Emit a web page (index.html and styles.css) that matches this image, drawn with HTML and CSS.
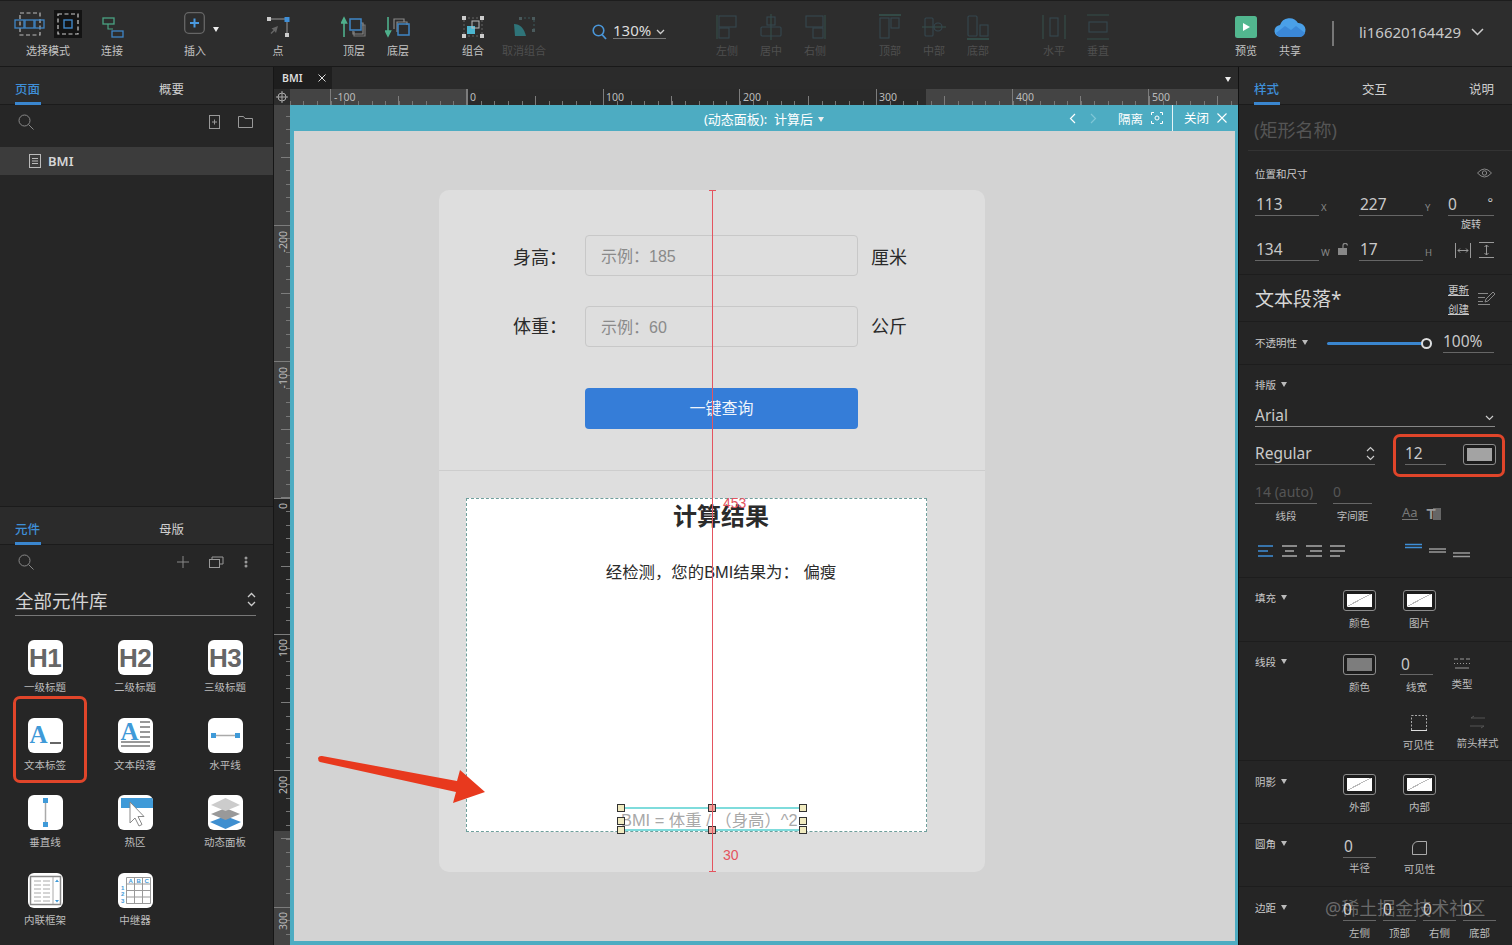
FILE: index.html
```html
<!DOCTYPE html>
<html lang="zh-CN">
<head>
    <meta charset="UTF-8">
    <title>BMI - Axure</title>
    <link rel="stylesheet" href="styles.css">
</head>
<body>
    <header class="toolbar">
        <div class="tool tool-mode">
            <div class="mode-icons">
                <svg width="32" height="24" viewBox="0 0 32 24" fill="none"><rect x="6" y="1" width="20" height="22" stroke="#bbb" stroke-width="1.2" stroke-dasharray="4 2.5"/><g stroke="#3f86c6" stroke-width="1.3"><rect x="1" y="8" width="9" height="8"/><rect x="11" y="8" width="9" height="8"/><rect x="21" y="8" width="9" height="8"/></g></svg>
                <span class="mode-active"><svg width="22" height="22" viewBox="0 0 22 22" fill="none"><rect x="1" y="1" width="20" height="20" stroke="#ccc" stroke-width="1.2" stroke-dasharray="4 2.5"/><rect x="7" y="7" width="8" height="8" stroke="#3f86c6" stroke-width="1.4"/></svg></span>
            </div>
            <span>选择模式</span>
        </div>
        <div class="tool">
            <svg width="24" height="24" viewBox="0 0 24 24" fill="none"><rect x="3" y="3" width="11" height="6" stroke="#4aa383" stroke-width="1.3"/><path d="M8 9v5h5" stroke="#4aa383" stroke-width="1.2"/><rect x="12" y="16" width="11" height="6" stroke="#3f86c6" stroke-width="1.3"/></svg>
            <span>连接</span>
        </div>
        <div class="tool g-insert">
            <div class="insert-icon">
                <svg width="21" height="22" viewBox="0 0 21 22" fill="none"><rect x=".7" y=".7" width="19.6" height="20.6" rx="4" stroke="#666" stroke-width="1.3"/><path d="M10.5 6.5v9M6 11h9" stroke="#4a9ae0" stroke-width="2"/></svg>
                <i class="tri tri-white"></i>
            </div>
            <span>插入</span>
        </div>
        <div class="tool g-point">
            <svg width="24" height="22" viewBox="0 0 24 22"><path d="M3 3h18v16" fill="none" stroke="#999" stroke-width="1"/><rect x="1" y="1" width="4" height="4" fill="#ccc"/><rect x="18.5" y="1" width="5" height="5" fill="#3f8fd8"/><rect x="19" y="17" width="4" height="4" fill="#ccc"/><path d="M12 10l-2 7-1.5-2-3 3-1-1 3-3-2-1.5z" fill="#666"/></svg>
            <span>点</span>
        </div>
        <div class="tool g-order">
            <svg width="26" height="22" viewBox="0 0 26 22" fill="none"><path d="M3 21V3M.5 7L3 2l2.5 5z" stroke="#4fb08c" stroke-width="1.6" fill="#4fb08c"/><path d="M14 16h-1v4h11V9h-3" stroke="#777" stroke-width="1.2"/><path d="M12 15v3h10V7h-2" stroke="#888" stroke-width="1.2"/><rect x="9" y="3" width="11" height="11" stroke="#3f86c6" stroke-width="1.5"/></svg>
            <span>顶层</span>
        </div>
        <div class="tool">
            <svg width="26" height="22" viewBox="0 0 26 22" fill="none"><path d="M3 1v17M.5 15L3 20l2.5-5z" stroke="#4fb08c" stroke-width="1.6" fill="#4fb08c"/><path d="M9 13V3h10v3M12 16V6h10v3" stroke="#888" stroke-width="1.2"/><rect x="13" y="8" width="11" height="11" stroke="#3f86c6" stroke-width="1.5"/></svg>
            <span>底层</span>
        </div>
        <div class="tool g-group">
            <svg width="22" height="22" viewBox="0 0 22 22" fill="none"><rect x="2" y="2" width="18" height="18" stroke="#666" stroke-dasharray="2 2"/><g fill="#ccc"><rect x="0" y="0" width="4" height="4"/><rect x="18" y="0" width="4" height="4"/><rect x="0" y="18" width="4" height="4"/><rect x="18" y="18" width="4" height="4"/></g><rect x="5" y="10" width="8" height="8" fill="#4cb6d0"/><rect x="10" y="5" width="7" height="7" stroke="#bbb"/></svg>
            <span>组合</span>
        </div>
        <div class="tool g-ungroup dim">
            <svg width="24" height="22" viewBox="0 0 24 22" fill="none"><path d="M8 2h14v14" stroke="#3c5a5c" stroke-dasharray="2 2"/><path d="M2 8c6 0 10 4 12 12H3z" fill="#2f7479"/><rect x="7" y="1" width="3" height="3" fill="#4a5a5c"/><rect x="20" y="1" width="3" height="3" fill="#4a5a5c"/><rect x="20" y="13" width="3" height="3" fill="#4a5a5c"/></svg>
            <span>取消组合</span>
        </div>
        <div class="zoom-box">
            <svg width="15" height="16" viewBox="0 0 15 16" fill="none"><circle cx="6.5" cy="6.5" r="5.3" stroke="#4a96d8" stroke-width="1.6"/><path d="M10 10.5l4 4.5" stroke="#4a96d8" stroke-width="1.8"/></svg>
            <div class="zoom-value">130%<svg width="9" height="6" viewBox="0 0 9 6" fill="none"><path d="M1 1l3.5 3.5L8 1" stroke="#ccc" stroke-width="1.3"/></svg></div>
        </div>
        <div class="tool g-align dim">
            <svg width="22" height="26" viewBox="0 0 22 26" fill="none" stroke="#35474f" stroke-width="1.1"><path d="M1 1v24" stroke="#354f4a"/><rect x="3" y="2" width="17" height="11"/><rect x="3" y="14" width="10" height="10"/></svg>
            <span>左侧</span>
        </div>
        <div class="tool dim">
            <svg width="22" height="26" viewBox="0 0 22 26" fill="none" stroke="#35474f" stroke-width="1.1"><path d="M11 0v26" stroke="#354f4a"/><rect x="7" y="3" width="8" height="8"/><rect x="1" y="13" width="20" height="9" rx="1"/></svg>
            <span>居中</span>
        </div>
        <div class="tool dim">
            <svg width="22" height="26" viewBox="0 0 22 26" fill="none" stroke="#35474f" stroke-width="1.1"><path d="M21 1v24" stroke="#354f4a"/><rect x="2" y="2" width="17" height="11"/><rect x="9" y="14" width="10" height="10"/></svg>
            <span>右侧</span>
        </div>
        <div class="tool g-valign dim">
            <svg width="22" height="26" viewBox="0 0 22 26" fill="none" stroke="#35474f" stroke-width="1.1"><path d="M0 1h22" stroke="#354f4a" stroke-width="1.8"/><rect x="1" y="4" width="9" height="20"/><rect x="12" y="4" width="8" height="10"/></svg>
            <span>顶部</span>
        </div>
        <div class="tool dim">
            <svg width="24" height="22" viewBox="0 0 24 22" fill="none" stroke="#35474f" stroke-width="1.1"><path d="M0 11h24" stroke="#354f4a"/><rect x="3" y="2" width="8" height="18" rx="1"/><circle cx="16" cy="11" r="4"/></svg>
            <span>中部</span>
        </div>
        <div class="tool dim">
            <svg width="22" height="26" viewBox="0 0 22 26" fill="none" stroke="#35474f" stroke-width="1.1"><path d="M0 25h22" stroke="#354f4a" stroke-width="1.8"/><rect x="1" y="2" width="9" height="20" rx="1"/><rect x="13" y="11" width="8" height="11"/></svg>
            <span>底部</span>
        </div>
        <div class="tool g-dist dim">
            <svg width="24" height="26" viewBox="0 0 24 26" fill="none" stroke="#35474f" stroke-width="1.1"><path d="M1 1v24M23 1v24" stroke="#354f4a"/><rect x="8" y="4" width="8" height="18"/></svg>
            <span>水平</span>
        </div>
        <div class="tool dim">
            <svg width="24" height="26" viewBox="0 0 24 26" fill="none" stroke="#35474f" stroke-width="1.1"><path d="M1 1h22M1 25h22" stroke="#354f4a"/><rect x="3" y="8" width="18" height="10"/></svg>
            <span>垂直</span>
        </div>
        <div class="tool g-share">
            <svg width="22" height="22" viewBox="0 0 22 22"><rect width="22" height="22" rx="2.5" fill="#52b78f"/><path d="M8 7l7 4-7 4z" fill="#fff"/></svg>
            <span>预览</span>
        </div>
        <div class="tool">
            <svg width="32" height="22" viewBox="0 0 32 22"><path d="M7 21a6 6 0 0 1-1-12 10 10 0 0 1 18-2 7 7 0 0 1 1 14z" fill="#4aa0e8"/><path d="M2 17l9-7 6 4 5-4 9 7a6 6 0 0 1-6 4H7a6 6 0 0 1-5-4z" fill="#3b88d8"/></svg>
            <span>共享</span>
        </div>
        <div class="tool-sep"></div>
        <div class="user">li16620164429<svg width="13" height="8" viewBox="0 0 13 8" fill="none"><path d="M1 1l5.5 5.5L12 1" stroke="#ccc" stroke-width="1.5"/></svg></div>
    </header>

    <div class="workspace">
        <aside class="left-panel">
            <section class="pages">
                <nav class="tabs">
                    <a class="tab active">页面</a>
                    <a class="tab tab-second">概要</a>
                </nav>
                <div class="search-row">
                    <svg width="16" height="16" viewBox="0 0 16 16" fill="none"><circle cx="6.5" cy="6.5" r="5.5" stroke="#888"/><path d="M10.5 10.5l5 5" stroke="#888"/></svg>
                    <div class="search-actions">
                        <svg width="11" height="14" viewBox="0 0 11 14" fill="none" stroke="#999"><rect x=".5" y=".5" width="10" height="13"/><path d="M3 7h5M5.5 4.5v5"/></svg>
                        <svg width="15" height="12" viewBox="0 0 15 12" fill="none" stroke="#999"><path d="M.5 11.5V.5h5l1.5 2h7.5v9z"/></svg>
                    </div>
                </div>
                <div class="page-row">
                    <svg width="12" height="14" viewBox="0 0 12 14" fill="none" stroke="#bbb"><rect x=".5" y=".5" width="11" height="13"/><path d="M3 4.5h6M3 7h6M3 9.5h6"/></svg>
                    BMI
                </div>
            </section>
            <section class="widgets">
                <nav class="tabs">
                    <a class="tab active">元件</a>
                    <a class="tab tab-second">母版</a>
                </nav>
                <div class="search-row">
                    <svg width="16" height="16" viewBox="0 0 16 16" fill="none"><circle cx="6.5" cy="6.5" r="5.5" stroke="#888"/><path d="M10.5 10.5l5 5" stroke="#888"/></svg>
                    <div class="search-actions widget-actions">
                        <svg width="12" height="12" viewBox="0 0 12 12" stroke="#888"><path d="M6 0v12M0 6h12"/></svg>
                        <svg width="15" height="12" viewBox="0 0 15 12" fill="none" stroke="#999"><rect x=".5" y="3.5" width="10" height="8"/><path d="M3 3V1h11v7h-3"/></svg>
                        <svg width="4" height="12" viewBox="0 0 4 12" fill="#999"><circle cx="2" cy="2" r="1.5"/><circle cx="2" cy="6" r="1.5"/><circle cx="2" cy="10" r="1.5"/></svg>
                    </div>
                </div>
                <div class="lib-select">全部元件库
                    <svg width="9" height="15" viewBox="0 0 9 15" fill="none" stroke="#ccc" stroke-width="1.3"><path d="M1 5l3.5-3.5L8 5M1 10l3.5 3.5L8 10"/></svg>
                </div>
                <div class="widget-grid">
                    <div class="widget"><div class="w-icon w-head">H1</div><span>一级标题</span></div>
                    <div class="widget"><div class="w-icon w-head">H2</div><span>二级标题</span></div>
                    <div class="widget"><div class="w-icon w-head">H3</div><span>三级标题</span></div>
                    <div class="widget">
                        <div class="w-icon w-label"><b>A</b><i></i></div><span>文本标签</span>
                    </div>
                    <div class="widget">
                        <div class="w-icon w-para"><b>A</b><svg width="35" height="35" viewBox="0 0 35 35" stroke="#777" stroke-width="1.4"><path d="M22 4h10M22 9h10M22 14h10M22 19h10M3 24h29M3 28h29"/></svg></div><span>文本段落</span>
                    </div>
                    <div class="widget">
                        <div class="w-icon"><svg width="35" height="35" viewBox="0 0 35 35"><path d="M5 17.5h25" stroke="#aaa" stroke-width="1.5"/><rect x="3" y="15" width="5" height="5" fill="#3f9ad8"/><rect x="27" y="15" width="5" height="5" fill="#3f9ad8"/></svg></div><span>水平线</span>
                    </div>
                    <div class="widget">
                        <div class="w-icon"><svg width="35" height="35" viewBox="0 0 35 35"><path d="M17.5 5v25" stroke="#aaa" stroke-width="1.5"/><rect x="15" y="3" width="5" height="5" fill="#3f9ad8"/><rect x="15" y="27" width="5" height="5" fill="#3f9ad8"/></svg></div><span>垂直线</span>
                    </div>
                    <div class="widget">
                        <div class="w-icon"><svg width="35" height="35" viewBox="0 0 35 35"><rect y="3" width="32" height="10" x="3" fill="#3f9ad8"/><path d="M12 7l0 21 5-5 4 8 3-1.5-4-8h6z" fill="#fff" stroke="#888"/></svg></div><span>热区</span>
                    </div>
                    <div class="widget">
                        <div class="w-icon"><svg width="35" height="35" viewBox="0 0 35 35"><path d="M17.5 21L33 27l-15.5 7L2 27z" fill="#3f8fd0"/><path d="M17.5 13L32 19l-14.5 6L3 19z" fill="#999"/><path d="M17.5 3L32 10l-14.5 6L3 10z" fill="#ccc"/></svg></div><span>动态面板</span>
                    </div>
                    <div class="widget">
                        <div class="w-icon"><svg width="35" height="35" viewBox="0 0 35 35" fill="none" stroke="#aaa"><rect x="2.5" y="3.5" width="30" height="28" stroke="#888" stroke-width="1.5"/><path d="M6 8h7M15 8h7M6 12h7M15 12h7M6 16h7M15 16h7M6 20h7M15 20h7M6 24h7M15 24h7M6 28h7M15 28h7"/><path d="M25 4v27"/><path d="M27 9l2-2.5L31 9zM27 27l2 2.5 2-2.5z" fill="#3f9ad8" stroke="none"/></svg></div><span>内联框架</span>
                    </div>
                    <div class="widget">
                        <div class="w-icon w-repeater">
                            <svg width="35" height="35" viewBox="0 0 35 35" fill="none" stroke="#999"><path d="M8.5 4.5h24v26h-24zM8.5 11h24M8.5 17.5h24M8.5 24h24M16.5 4.5v26M24.5 4.5v26"/><g fill="#3f9ad8" stroke="none" font-size="6" font-weight="700" font-family="Liberation Sans, sans-serif"><text x="10.5" y="10">A</text><text x="18.5" y="10">B</text><text x="26.5" y="10">C</text><text x="3" y="16.5">1</text><text x="3" y="23">2</text><text x="3" y="29.5">3</text></g></svg>
                        </div><span>中继器</span>
                    </div>
                </div>
                <div class="highlight highlight-label"></div>
            </section>
        </aside>

        <main class="center">
            <div class="doc-tabs">
                <div class="doc-tab">BMI<svg width="8" height="8" viewBox="0 0 8 8" stroke="#ddd"><path d="M.5.5l7 7M7.5.5l-7 7"/></svg></div>
                <i class="tri tri-white doc-caret"></i>
            </div>
            <div class="ruler-row">
                <div class="ruler-corner"><svg width="12" height="12" viewBox="0 0 12 12" fill="none" stroke="#aaa"><circle cx="6" cy="6" r="4"/><path d="M6 0v12M0 6h12"/></svg></div>
                <div class="h-ruler">
                    <span class="hr-label hr-m100">-100</span>
                    <span class="hr-label hr-0">0</span>
                    <span class="hr-label hr-100">100</span>
                    <span class="hr-label hr-200">200</span>
                    <span class="hr-label hr-300">300</span>
                    <span class="hr-label hr-400">400</span>
                    <span class="hr-label hr-500">500</span>
                </div>
            </div>
            <div class="stage-row">
                <div class="v-ruler">
                    <span class="vr-label vr-m300">-300</span>
                    <span class="vr-label vr-m200">-200</span>
                    <span class="vr-label vr-m100">-100</span>
                    <span class="vr-label vr-0">0</span>
                    <span class="vr-label vr-100">100</span>
                    <span class="vr-label vr-200">200</span>
                    <span class="vr-label vr-300">300</span>
                </div>
                <div class="stage">
                    <div class="state-bar">
                        <div class="state-name">(动态面板):&nbsp; 计算后<i class="tri tri-white"></i></div>
                        <div class="state-actions">
                            <svg width="7" height="11" viewBox="0 0 7 11" fill="none" stroke="#fff" stroke-width="1.2"><path d="M6 1L1.5 5.5 6 10"/></svg>
                            <svg class="state-next" width="7" height="11" viewBox="0 0 7 11" fill="none" stroke="#7fc6d6" stroke-width="1.2"><path d="M1 1l4.5 4.5L1 10"/></svg>
                            <span class="state-isolate">隔离</span>
                            <svg width="12" height="12" viewBox="0 0 12 12" fill="none" stroke="#fff"><path d="M.5 3V.5H3M9 .5h2.5V3M11.5 9v2.5H9M3 11.5H.5V9"/><circle cx="6" cy="6" r="2"/></svg>
                            <span class="state-close">关闭</span>
                            <svg width="10" height="10" viewBox="0 0 10 10" stroke="#fff" stroke-width="1.1"><path d="M.5.5l9 9M9.5.5l-9 9"/></svg>
                        </div>
                    </div>
                    <div class="canvas">
                        <div class="card">
                            <div class="card-form">
                                <div class="form-row form-row-first">
                                    <label>身高：</label>
                                    <div class="fake-input">示例：185</div>
                                    <span>厘米</span>
                                </div>
                                <div class="form-row">
                                    <label>体重：</label>
                                    <div class="fake-input">示例：60</div>
                                    <span>公斤</span>
                                </div>
                                <div class="query-btn">一键查询</div>
                            </div>
                            <div class="card-result">
                                <div class="result-panel">
                                    <h2>计算结果</h2>
                                    <p>经检测，您的BMI结果为： 偏瘦</p>
                                    <div class="selected-text">
                                        BMI = 体重 / （身高）^2
                                        <i class="handle h-tl"></i><i class="handle h-tc"></i><i class="handle h-tr"></i>
                                        <i class="handle h-ml"></i><i class="handle h-mr"></i>
                                        <i class="handle h-bl"></i><i class="handle h-bc"></i><i class="handle h-br"></i>
                                    </div>
                                </div>
                            </div>
                        </div>
                        <div class="guide"></div>
                        <span class="guide-num num-top">453</span>
                        <span class="guide-num num-bottom">30</span>
                        <svg class="big-arrow" width="170" height="52" viewBox="0 0 170 52"><path d="M1 3Q2 .5 5 1L140 26l3-11 25 22-32 11 3-11L3 7Q1 6 1 3z" fill="#e8391e"/></svg>
                    </div>
                </div>
            </div>
        </main>

        <aside class="right-panel">
            <nav class="tabs right-tabs">
                <a class="tab active">样式</a>
                <a class="tab">交互</a>
                <a class="tab">说明</a>
            </nav>
            <div class="name-row"><span>(矩形名称)</span></div>

            <section class="sec sec-pos">
                <div class="sec-head">位置和尺寸
                    <svg width="15" height="10" viewBox="0 0 15 10" fill="none" stroke="#888"><path d="M.5 5Q7.5-3 14.5 5 7.5 13 .5 5z"/><circle cx="7.5" cy="5" r="2.2"/></svg>
                </div>
                <div class="pos-row pos-first">
                    <div class="field f-pos">113</div><em class="axis">X</em>
                    <div class="field f-pos">227</div><em class="axis axis-y">Y</em>
                    <div class="rotate">
                        <div class="field f-rot">0<sup>°</sup></div>
                        <small>旋转</small>
                    </div>
                </div>
                <div class="pos-row pos-second">
                    <div class="field f-pos">134</div>
                    <em class="axis axis-w">W<svg width="11" height="12" viewBox="0 0 11 12"><rect x="0" y="5" width="9" height="7" fill="#888"/><path d="M5 5V2.5a2.2 2.2 0 0 1 4.4 0" fill="none" stroke="#888" stroke-width="1.2"/></svg></em>
                    <div class="field f-pos">17</div><em class="axis axis-y">H</em>
                    <div class="fit-icons">
                        <svg width="16" height="15" viewBox="0 0 16 15" fill="none" stroke="#999"><path d="M.5 0v15M15.5 0v15M3 7.5h10M3 7.5l2-2M3 7.5l2 2M13 7.5l-2-2M13 7.5l-2 2"/></svg>
                        <svg width="15" height="16" viewBox="0 0 15 16" fill="none" stroke="#999"><path d="M0 .5h15M0 15.5h15M7.5 3v10M7.5 3l-2 2M7.5 3l2 2M7.5 13l-2-2M7.5 13l2-2"/></svg>
                    </div>
                </div>
            </section>

            <section class="sec sec-style">
                <span class="style-name">文本段落*</span>
                <div class="style-links"><a>更新</a><a>创建</a></div>
                <svg width="17" height="14" viewBox="0 0 17 14" fill="none" stroke="#888"><path d="M0 2.5h10M0 6.5h7M0 10.5h5M0 13.5h12M7 11l1-3 7-7 2 2-7 7z"/></svg>
            </section>

            <section class="sec sec-opacity">
                <span class="sec-label op-label">不透明性<i class="tri"></i></span>
                <div class="slider"><i></i></div>
                <div class="field f-op">100%</div>
            </section>

            <section class="sec sec-type">
                <span class="sec-label">排版<i class="tri"></i></span>
                <div class="field f-font">Arial<svg width="9" height="6" viewBox="0 0 9 6" fill="none" stroke="#ccc" stroke-width="1.2"><path d="M1 1l3.5 3.5L8 1"/></svg></div>
                <div class="type-row">
                    <div class="field f-weight">Regular<svg width="9" height="15" viewBox="0 0 9 15" fill="none" stroke="#ccc" stroke-width="1.2"><path d="M1 5l3.5-3.5L8 5M1 10l3.5 3.5L8 10"/></svg></div>
                    <div class="field f-size">12</div>
                    <span class="swatch swatch-solid"><i></i></span>
                </div>
                <div class="metric-row">
                    <div class="metric m-line"><div class="field f-dim">14 (auto)</div><small>线段</small></div>
                    <div class="metric m-space"><div class="field f-dim">0</div><small>字间距</small></div>
                    <span class="aa">Aa</span>
                    <span class="tt">T<i></i></span>
                </div>
                <svg class="align-icons" width="216" height="18" viewBox="0 0 216 18" fill="none" stroke-width="1.6">
                    <path d="M3 4h15M3 9h10M3 14h15" stroke="#3f8fd8"/>
                    <path d="M27 4h15M30 9h9M27 14h15M51 4h16M55 9h12M51 14h16M75 4h15M75 9h15M75 14h10" stroke="#aaa"/>
                    <path d="M150 2.5h17M150 5.5h17" stroke="#3f8fd8"/>
                    <path d="M174 7h17M174 10h17M198 11h17M198 14.5h17" stroke="#999"/>
                </svg>
                <div class="highlight highlight-size"></div>
            </section>

            <section class="sec sec-row sec-fill">
                <span class="sec-label">填充<i class="tri"></i></span>
                <div class="prop"><span class="swatch"><i></i></span><small>颜色</small></div>
                <div class="prop prop-next"><span class="swatch"><i></i></span><small>图片</small></div>
            </section>

            <section class="sec sec-line">
                <div class="sec-row line-top">
                    <span class="sec-label">线段<i class="tri"></i></span>
                    <div class="prop"><span class="swatch swatch-gray"><i></i></span><small>颜色</small></div>
                    <div class="prop prop-width"><div class="field f-small">0</div><small>线宽</small></div>
                    <div class="prop prop-kind">
                        <svg width="16" height="21" viewBox="0 0 16 21" fill="none" stroke="#999"><path d="M0 5h4M6 5h4M12 5h4M0 9.5h1M3 9.5h1M6 9.5h1M9 9.5h1M12 9.5h1M15 9.5h1M1 14h14"/></svg>
                        <small>类型</small>
                    </div>
                </div>
                <div class="line-bottom">
                    <div class="prop">
                        <svg width="16" height="16" viewBox="0 0 16 16" fill="none" stroke="#aaa"><rect x=".5" y=".5" width="15" height="15" stroke-dasharray="2 1.5"/><path d="M0 15.5h16" stroke="#ddd"/></svg>
                        <small>可见性</small>
                    </div>
                    <div class="prop prop-arrow">
                        <svg width="15" height="14" viewBox="0 0 15 14" fill="none" stroke="#555"><path d="M15 3H1l3-2M0 11h14l-3 2"/></svg>
                        <small>箭头样式</small>
                    </div>
                </div>
            </section>

            <section class="sec sec-row sec-shadow">
                <span class="sec-label">阴影<i class="tri"></i></span>
                <div class="prop"><span class="swatch"><i></i></span><small>外部</small></div>
                <div class="prop prop-next"><span class="swatch"><i></i></span><small>内部</small></div>
            </section>

            <section class="sec sec-row sec-radius">
                <span class="sec-label">圆角<i class="tri"></i></span>
                <div class="prop"><div class="field f-small">0</div><small>半径</small></div>
                <div class="prop prop-corner">
                    <svg width="15" height="14" viewBox="0 0 15 14" fill="none" stroke="#aaa"><path d="M.5 13.5V6A5.5 5.5 0 0 1 6 .5h8.5v13z"/></svg>
                    <small>可见性</small>
                </div>
            </section>

            <section class="sec sec-row sec-margin">
                <span class="sec-label">边距<i class="tri"></i></span>
                <div class="prop"><div class="field f-margin">0</div><small>左侧</small></div>
                <div class="prop"><div class="field f-margin">0</div><small>顶部</small></div>
                <div class="prop"><div class="field f-margin">0</div><small>右侧</small></div>
                <div class="prop"><div class="field f-margin">0</div><small>底部</small></div>
            </section>
            <span class="watermark">@稀土掘金技术社区</span>
        </aside>
    </div>
</body>
</html>
```

FILE: styles.css
```css
* {
    margin: 0;
    padding: 0;
    box-sizing: border-box;
}

html, body {
    height: 100%;
    overflow: hidden;
}

body {
    width: 1512px;
    height: 945px;
    background: #262626;
    color: #c9c9c9;
    font-family: "Noto Sans", "Noto Sans CJK SC", sans-serif;
    font-size: 11px;
}

i, em {
    font-style: normal;
}

/* small triangle used on dropdown labels */
.tri {
    display: inline-block;
    width: 0;
    height: 0;
    margin-left: 5px;
    border-left: 3px solid transparent;
    border-right: 3px solid transparent;
    border-top: 5px solid #bbb;
    vertical-align: 3px;
}

.tri-white {
    border-top-color: #eee;
}

/* toolbar */
.toolbar {
    display: flex;
    height: 67px;
    padding-left: 8px;
    background: #2d2d2d;
    border-top: 1px solid #1d1d1d;
    border-bottom: 1px solid #191919;
}

.tool {
    display: flex;
    flex-direction: column;
    align-items: center;
    justify-content: space-between;
    width: 44px;
    height: 64px;
    padding: 10px 0 7px;
    color: #c4c4c4;
    font-size: 11px;
    line-height: 15px;
    white-space: nowrap;
}

.tool svg {
    flex: none;
    margin: auto 0;
}

.tool.dim {
    color: #4f4f4f;
}

.tool-mode {
    width: 80px;
    margin-right: 2px;
}

.mode-icons {
    display: flex;
    align-items: center;
    height: 28px;
    margin-top: -1px;
    margin-left: -1px;
}

.mode-active {
    display: flex;
    align-items: center;
    justify-content: center;
    width: 28px;
    height: 28px;
    margin-left: 8px;
    background: #131313;
}

.insert-icon {
    display: flex;
    align-items: flex-end;
    height: 28px;
    padding-left: 12px;
    padding-bottom: 4px;
}

.insert-icon .tri {
    margin-left: 8px;
    margin-bottom: 3px;
    vertical-align: 0;
}

.g-insert { margin-left: 39px; }
.g-point { margin-left: 39px; }
.g-order { margin-left: 32px; }
.g-group { margin-left: 31px; }
.g-ungroup { margin-left: 7px; }
.g-align { margin-left: 0; }
.g-valign { margin-left: 31px; }
.g-dist { margin-left: 32px; }
.g-share { margin-left: 104px; }

.zoom-box {
    display: flex;
    align-items: flex-start;
    gap: 6px;
    width: 159px;
    padding: 23px 0 0 46px;
}

.zoom-value {
    display: flex;
    align-items: center;
    gap: 5px;
    width: 53px;
    height: 17px;
    margin-top: -2px;
    border-bottom: 1px solid #777;
    color: #ddd;
    font-size: 15px;
    line-height: 15px;
}

.zoom-value svg {
    margin-top: 4px;
}

.tool-sep {
    width: 2px;
    height: 25px;
    margin: 20px 0 0 20px;
    background: #777;
}

.user {
    display: flex;
    align-items: center;
    gap: 10px;
    height: 62px;
    margin-left: 25px;
    color: #c8c8c8;
    font-size: 15px;
}

/* main layout */
.workspace {
    display: flex;
    height: 878px;
}

.left-panel {
    position: relative;
    display: flex;
    flex-direction: column;
    width: 274px;
    background: #262626;
    border-right: 1px solid #161616;
}

.tabs {
    display: flex;
    height: 38px;
    padding: 14px 0 0 15px;
    background: #2b2b2b;
    border-bottom: 1px solid #1b1b1b;
}

.tab {
    position: relative;
    width: 26px;
    color: #cfcfcf;
    font-size: 12.5px;
    line-height: 17px;
    white-space: nowrap;
}

.tab.active {
    color: #3f8fd8;
    font-weight: 500;
}

.tab.active::after {
    content: "";
    position: absolute;
    left: 0;
    right: 0;
    top: 21px;
    height: 3px;
    background: #3a86cf;
}

.tab-second {
    margin-left: 118px;
}

.pages {
    flex: none;
    height: 439px;
}

.search-row {
    display: flex;
    align-items: center;
    justify-content: space-between;
    height: 36px;
    padding: 0 20px 2px 18px;
}

.search-actions {
    display: flex;
    align-items: center;
    gap: 18px;
}

.widget-actions {
    gap: 20px;
    padding-right: 5px;
}

.page-row {
    display: flex;
    align-items: center;
    gap: 7px;
    height: 28px;
    margin-top: 6px;
    padding: 0 0 1px 29px;
    background: #3c3c3c;
    color: #d6d6d6;
    font-size: 13px;
    font-weight: 600;
}

.widgets {
    flex: 1;
    min-height: 0;
    border-top: 1px solid #1b1b1b;
}

.lib-select {
    display: flex;
    align-items: center;
    justify-content: space-between;
    width: 241px;
    height: 32px;
    margin: 3px 0 0 15px;
    border-bottom: 1px solid #777;
    color: #d4d4d4;
    font-size: 18.5px;
}

.widget-grid {
    display: grid;
    grid-template-columns: repeat(3, 90px);
    grid-auto-rows: 77.7px;
    margin-top: 24px;
}

.widget {
    display: flex;
    flex-direction: column;
    align-items: center;
    color: #bdbdbd;
    font-size: 10.5px;
    line-height: 14px;
}

.widget span {
    margin-top: 5px;
}

.w-icon {
    position: relative;
    display: flex;
    align-items: center;
    justify-content: center;
    width: 35px;
    height: 35px;
    background: #fff;
    border-radius: 6px;
    overflow: hidden;
}

.w-head {
    color: #666;
    font-family: "Liberation Sans", sans-serif;
    font-size: 26px;
    font-weight: 700;
    letter-spacing: -0.5px;
}

.w-label b, .w-para b {
    position: absolute;
    left: 2px;
    top: 4px;
    color: #3f9ad8;
    font-family: "Liberation Serif", serif;
    font-size: 25px;
    line-height: 26px;
}

.w-label i {
    position: absolute;
    left: 22px;
    bottom: 9px;
    width: 11px;
    height: 2px;
    background: #666;
}

.w-para b {
    top: 1px;
    left: 3px;
}

.w-para svg {
    position: relative;
}

/* red call-out boxes */
.highlight {
    position: absolute;
    border: 3px solid #e0452a;
    border-radius: 7px;
    pointer-events: none;
}

.highlight-label {
    left: 13px;
    top: 629px;
    width: 74px;
    height: 87px;
}

/* canvas column */
.center {
    display: flex;
    flex-direction: column;
    width: 964px;
}

.doc-tabs {
    display: flex;
    align-items: center;
    justify-content: space-between;
    height: 22px;
    padding-right: 7px;
    background: #2b2b2b;
}

.doc-tab {
    display: flex;
    align-items: center;
    justify-content: space-between;
    width: 58px;
    height: 22px;
    padding: 0 6px 0 8px;
    background: #1e1e1e;
    color: #ddd;
    font-size: 10.5px;
    font-weight: 600;
}

.doc-caret {
    margin: 3px 0 0;
    vertical-align: 0;
}

.ruler-row {
    display: flex;
    height: 16px;
}

.ruler-corner {
    display: flex;
    align-items: center;
    justify-content: center;
    width: 16px;
    background: #2c2c2c;
}

.h-ruler {
    position: relative;
    flex: 1;
    background-color: #2a2a2a;
    background-image:
        repeating-linear-gradient(90deg, #7c7c7c 40.1px, #7c7c7c 41.1px, transparent 41.1px, transparent 176.5px),
        repeating-linear-gradient(90deg, #7c7c7c 40.1px, #7c7c7c 41.1px, transparent 41.1px, transparent 108.3px),
        repeating-linear-gradient(90deg, #777 -0.32px, #777 0.68px, transparent 0.68px, transparent 13.32px),
        linear-gradient(90deg, #444 177px, #2a2a2a 177px, #2a2a2a 636px, #444 636px);
    background-size: 100% 16px, 100% 9px, 100% 4px, 100% 100%;
    background-position: left bottom;
    background-repeat: no-repeat;
}

.hr-label {
    position: absolute;
    top: 1px;
    color: #bbb;
    font-size: 10.5px;
    line-height: 14px;
}

.hr-m100 { left: 44px; }
.hr-0 { left: 180px; }
.hr-100 { left: 316px; }
.hr-200 { left: 453px; }
.hr-300 { left: 589px; }
.hr-400 { left: 726px; }
.hr-500 { left: 862px; }

.stage-row {
    display: flex;
    flex: 1;
    min-height: 0;
}

.v-ruler {
    position: relative;
    flex: none;
    width: 16px;
    overflow: hidden;
    background-image:
        repeating-linear-gradient(180deg, #7c7c7c 119.7px, #7c7c7c 120.7px, transparent 120.7px, transparent 256.1px),
        repeating-linear-gradient(180deg, #7c7c7c 51.5px, #7c7c7c 52.5px, transparent 52.5px, transparent 119.7px),
        repeating-linear-gradient(180deg, #777 10.6px, #777 11.6px, transparent 11.6px, transparent 24.24px),
        linear-gradient(180deg, #444 393px, #252525 393px, #252525 726px, #444 726px);
    background-size: 100% 100%, 9px 100%, 4px 100%, 100% 100%;
    background-position: right top;
    background-repeat: no-repeat;
}

.vr-label {
    position: absolute;
    left: 3px;
    color: #bbb;
    font-size: 10.5px;
    line-height: 12px;
    writing-mode: vertical-rl;
    transform: rotate(180deg);
}

.vr-m300 { top: -21px; }
.vr-m200 { top: 126px; }
.vr-m100 { top: 262px; }
.vr-0 { top: 398px; }
.vr-100 { top: 534px; }
.vr-200 { top: 671px; }
.vr-300 { top: 807px; }

.stage {
    flex: 1;
    display: flex;
    flex-direction: column;
    padding: 0 3px 4px 4px;
    background: #4dacc2;
}

.state-bar {
    position: relative;
    display: flex;
    align-items: center;
    justify-content: center;
    height: 26px;
    margin: 0 -3px 0 -4px;
    padding-top: 1px;
    color: #fff;
    font-size: 12.5px;
}

.state-name {
    font-size: 13px;
}

.state-name .tri {
    vertical-align: 2px;
}

.state-actions {
    position: absolute;
    top: 0;
    right: 11px;
    display: flex;
    align-items: center;
    height: 26px;
}

.state-next {
    margin-left: 14px;
}

.state-isolate {
    margin: 1px 8px 0 21px;
}

.state-close {
    height: 26px;
    margin: 0 8px 0 9px;
    padding-left: 11px;
    border-left: 1px solid #e5f3f6;
    line-height: 28px;
}

.canvas {
    position: relative;
    flex: 1;
    padding: 59px 0 0 145px;
    background: #d3d3d3;
    font-family: "Liberation Sans", "Noto Sans CJK SC", sans-serif;
    overflow: hidden;
}

.card {
    width: 546px;
    height: 682px;
    background: #dedede;
    border-radius: 10px;
}

.card-form {
    height: 281px;
    padding-top: 45px;
    border-bottom: 1px solid #cdcdcd;
}

.form-row {
    display: grid;
    grid-template-columns: 146px 273px auto;
    align-items: center;
    height: 41px;
    margin-bottom: 30px;
    color: #2a2a2a;
    font-size: 18px;
    line-height: 26px;
}

.form-row label {
    padding-left: 74px;
}

.form-row span {
    margin-left: 13px;
}

.form-row-first label, .form-row-first span {
    padding-top: 5px;
}

.fake-input {
    height: 41px;
    padding-left: 15px;
    background: #dedede;
    border: 1px solid #c8c8c8;
    border-radius: 4px;
    color: #8a8a8a;
    font-size: 16px;
    line-height: 41px;
}

.query-btn {
    width: 273px;
    height: 41px;
    margin: 41px 0 0 146px;
    background: #357dd8;
    border-radius: 4px;
    color: #eef4fb;
    font-size: 16px;
    line-height: 42px;
    text-align: center;
}

.card-result {
    padding: 27px 0 0 27px;
}

.result-panel {
    display: flex;
    flex-direction: column;
    width: 461px;
    height: 334px;
    padding-left: 49px;
    background: #fff;
    border: 1px dashed #6f9f9c;
    color: #2b2b2b;
    text-align: center;
}

.result-panel h2 {
    font-size: 24px;
    line-height: 36px;
}

.result-panel p {
    margin-top: 25px;
    font-size: 16.4px;
    line-height: 24px;
}

.selected-text {
    position: relative;
    align-self: flex-start;
    width: 182px;
    height: 24px;
    margin: auto 0 0 105px;
    border-top: 2px solid #7fdcdc;
    border-bottom: 2px solid #7fdcdc;
    color: #a8a8a8;
    font-size: 16.4px;
    line-height: 22px;
    text-align: left;
    white-space: nowrap;
}

.handle {
    position: absolute;
    width: 8px;
    height: 8px;
    background: #f1ebc0;
    border: 1px solid #333;
}

.h-tl { left: -4px; top: -5px; }
.h-tc { left: 87px; top: -5px; background: #eda9a0; }
.h-tr { right: -4px; top: -5px; }
.h-ml { left: -4px; top: 8px; }
.h-mr { right: -4px; top: 8px; }
.h-bl { left: -4px; bottom: -5px; }
.h-bc { left: 87px; bottom: -5px; background: #eda9a0; }
.h-br { right: -4px; bottom: -5px; }

.guide {
    position: absolute;
    left: 418px;
    top: 59px;
    width: 1px;
    height: 682px;
    background: #e4545f;
}

.guide::before, .guide::after {
    content: "";
    position: absolute;
    left: -3px;
    width: 7px;
    height: 1px;
    background: #e4545f;
}

.guide::before { top: 0; }
.guide::after { bottom: 0; }

.guide-num {
    position: absolute;
    color: #e4545f;
    font-size: 14px;
    line-height: 16px;
}

.num-top { left: 429px; top: 364px; }
.num-bottom { left: 429px; top: 716px; }

.big-arrow {
    position: absolute;
    left: 23px;
    top: 624px;
}

/* right panel */
.right-panel {
    position: relative;
    display: flex;
    flex-direction: column;
    width: 274px;
    background: #252525;
    border-left: 1px solid #111;
}

.right-tabs {
    flex: none;
    gap: 81px;
    padding-left: 15px;
}

.right-tabs .tab {
    margin-right: 1px;
}

.right-tabs .tab:last-child {
    margin-left: -1px;
}

.name-row {
    flex: none;
    height: 46px;
    margin-left: 9px;
    padding: 10px 0 0 6px;
    border-bottom: 1px solid #333;
    color: #555;
    font-size: 18px;
    line-height: 30px;
}

.sec {
    position: relative;
    flex: none;
    padding-left: 16px;
    border-bottom: 1px solid #1d1d1d;
}

.sec-pos {
    height: 124px;
    padding-top: 14px;
}

.sec-head {
    display: flex;
    justify-content: space-between;
    align-items: center;
    height: 16px;
    padding-right: 20px;
    font-size: 10.5px;
}

.field {
    display: flex;
    align-items: center;
    justify-content: space-between;
    height: 22px;
    padding-bottom: 2px;
    border-bottom: 1px solid #666;
    color: #c9c9c9;
    font-size: 15.5px;
    line-height: 20px;
}

.pos-row {
    display: flex;
    align-items: flex-start;
}

.pos-first {
    margin-top: 13px;
    height: 37px;
}

.pos-second {
    margin-top: 8px;
}

.f-pos {
    width: 64px;
    padding-left: 1px;
}

.axis {
    width: 40px;
    padding: 6px 0 0 2px;
    color: #888;
    font-size: 9.5px;
    line-height: 16px;
}

.axis-y {
    width: 25px;
}

.axis-w {
    position: relative;
}

.axis-w svg {
    position: absolute;
    left: 19px;
    top: 4px;
}

.rotate {
    width: 46px;
    text-align: center;
}

.rotate small {
    display: block;
    margin-top: 1px;
    font-size: 10px;
    line-height: 14px;
}

.f-rot {
    padding-right: 1px;
}

.f-rot sup {
    margin-top: -3px;
    font-size: 13px;
    line-height: 13px;
}

.fit-icons {
    display: flex;
    gap: 8px;
    align-items: center;
    height: 22px;
    margin-left: 7px;
}

.sec-style {
    display: flex;
    align-items: center;
    height: 47px;
}

.style-name {
    width: 193px;
    color: #d6d6d6;
    font-size: 19px;
}

.style-links {
    display: flex;
    flex-direction: column;
    gap: 4px;
    width: 30px;
    padding-top: 4px;
    font-size: 10.5px;
    line-height: 15px;
}

.style-links a {
    text-decoration: underline;
}

.sec-opacity {
    display: flex;
    align-items: center;
    height: 43px;
}

.sec-label {
    flex: none;
    width: 88px;
    font-size: 10.5px;
    line-height: 14px;
}

.op-label {
    width: 72px;
}

.slider {
    position: relative;
    width: 105px;
    height: 3px;
    background: #3a86cf;
    border-radius: 2px;
}

.slider i {
    position: absolute;
    right: 0;
    top: -4px;
    width: 11px;
    height: 11px;
    background: #262626;
    border: 2px solid #ddd;
    border-radius: 50%;
}

.f-op {
    width: 51px;
    margin: -2px 0 0 11px;
}

.sec-type {
    height: 213px;
    padding-top: 13px;
}

.sec-type > .sec-label {
    display: block;
}

.f-font {
    width: 240px;
    margin-top: 13px;
    padding-right: 1px;
    border-bottom-color: #888;
}

.f-font svg {
    margin-top: 7px;
}

.type-row {
    display: flex;
    align-items: flex-end;
    margin-top: 16px;
}

.f-weight {
    width: 120px;
    padding-bottom: 1px;
}

.f-size {
    width: 41px;
    margin-left: 30px;
    padding-bottom: 1px;
}

.highlight-size {
    left: 154px;
    top: 69px;
    width: 112px;
    height: 43px;
}

.swatch {
    display: block;
    flex: none;
    width: 33px;
    height: 21px;
    padding: 3px;
    background: #1c1c1c;
    border: 1px solid #8c8c8c;
    border-radius: 3px;
}

.swatch i {
    display: block;
    height: 100%;
    background: linear-gradient(to bottom right, #fff calc(50% - 1px), #bbb calc(50% - 1px), #bbb 50%, #fff 50%);
}

.swatch-solid {
    margin-left: 17px;
}

.swatch-solid i {
    background: #a3a3a3;
}

.swatch-gray i {
    background: #7d7d7d;
}

.metric-row {
    display: flex;
    align-items: flex-start;
    margin-top: 17px;
}

.metric small, .prop small {
    display: block;
    color: #bdbdbd;
    font-size: 10.5px;
    line-height: 14px;
    text-align: center;
    white-space: nowrap;
}

.metric small {
    margin-top: 5px;
}

.f-dim {
    padding-bottom: 1px;
    color: #555;
    font-size: 14px;
}

.m-line {
    width: 62px;
}

.m-space {
    width: 39px;
    margin-left: 16px;
}

.aa {
    margin: 24px 0 0 30px;
    border-bottom: 1px solid #777;
    color: #777;
    font-size: 13px;
    line-height: 13px;
}

.tt {
    position: relative;
    isolation: isolate;
    margin: 24px 0 0 9px;
    color: #999;
    font-family: "Liberation Sans", sans-serif;
    font-size: 15px;
    font-weight: 700;
    line-height: 15px;
}

.tt i {
    position: absolute;
    left: 6px;
    top: 2px;
    width: 8px;
    height: 12px;
    background: #666;
    z-index: -1;
}

.align-icons {
    display: block;
    margin-top: 19px;
}

.sec-row {
    display: flex;
    align-items: flex-start;
}

.sec-label .tri {
    vertical-align: 2px;
}

.sec-fill {
    height: 64px;
    padding-top: 13px;
}

.sec-fill .prop {
    margin-top: -1px;
}

.sec-shadow .sec-label {
    padding-top: 1px;
}

.prop {
    display: flex;
    flex-direction: column;
    align-items: center;
    width: 33px;
}

.prop small {
    margin-top: 5px;
}

.prop-next {
    margin-left: 27px;
}

.sec-line {
    height: 119px;
    padding-top: 13px;
}

.line-top .prop {
    margin-top: -1px;
}

.line-top {
    height: 47px;
}

.prop-width {
    margin-left: 24px;
}

.prop-width .field {
    padding-bottom: 1px;
}

.prop-kind {
    width: 28px;
    margin-left: 15px;
}

.prop-kind small {
    margin-top: 2px;
}

.f-small {
    width: 100%;
    height: 21px;
    padding-left: 1px;
}

.line-bottom {
    display: flex;
    align-items: flex-start;
    padding: 13px 0 0 147px;
}

.line-bottom .prop small {
    margin-top: 7px;
}

.prop-arrow {
    margin-left: 26px;
}

.sec-shadow {
    height: 63px;
    padding-top: 13px;
}

.sec-radius {
    height: 63px;
    padding-top: 13px;
}

.sec-radius .prop small {
    margin-top: 3px;
}

.prop-corner {
    margin-left: 27px;
    padding-top: 4px;
}

.sec-radius .prop-corner small {
    margin-top: 7px;
}

.sec-margin {
    flex: 1;
    gap: 7px;
    padding-top: 13px;
    border-bottom: none;
}

.sec-margin .sec-label {
    margin-right: -7px;
    padding-top: 1px;
}

.f-margin {
    width: 33px;
    height: 21px;
}

.watermark {
    position: absolute;
    left: 86px;
    top: 829px;
    color: rgba(255, 255, 255, 0.32);
    font-size: 18px;
    line-height: 24px;
    white-space: nowrap;
}
```
